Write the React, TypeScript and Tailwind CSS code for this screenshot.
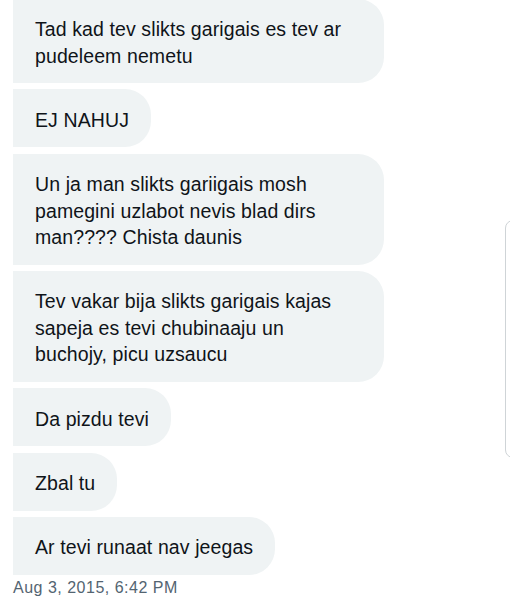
const messages: { lines: string[] }[] = [
  { lines: ['Tad kad tev slikts garigais es tev ar', 'pudeleem nemetu'] },
  { lines: ['EJ NAHUJ'] },
  { lines: ['Un ja man slikts gariigais mosh', 'pamegini uzlabot nevis blad dirs', 'man???? Chista daunis'] },
  { lines: ['Tev vakar bija slikts garigais kajas', 'sapeja es tevi chubinaaju un', 'buchojy, picu uzsaucu'] },
  { lines: ['Da pizdu tevi'] },
  { lines: ['Zbal tu'] },
  { lines: ['Ar tevi runaat nav jeegas'] },
];

function Bubble({ lines }: { lines: string[] }) {
  // wrapped messages fill the full bubble width
  const wide = lines.length > 1;
  return (
    <div
      className={`${wide ? 'w-[371px]' : 'w-fit'} rounded-r-[26px] bg-[#eff3f4] pb-[14px] pl-[22px] pr-[22px] pt-[17.5px] text-[19.5px] leading-[26.5px] tracking-[0.1px] text-[#0f1419]`}
    >
      {lines.map((line, i) => (
        <span key={i}>
          {line}
          {i < lines.length - 1 && <br />}
        </span>
      ))}
    </div>
  );
}

export default function App() {
  return (
    <div
      className="relative h-[600px] w-[510px] overflow-hidden bg-white"
      style={{ fontFamily: '"Liberation Sans", Arial, sans-serif' }}
    >
      {/* Conversation */}
      <div className="-mt-[1.5px] flex flex-col gap-[6.33px] pl-[13px]">
        {messages.map((m, i) => (
          <Bubble key={i} lines={m.lines} />
        ))}
        <div className="-mt-[3.7px] text-[16px] leading-[20px] tracking-[0.5px] text-[#536471]">Aug 3, 2015, 6:42 PM</div>
      </div>

      {/* Edge of the panel next to the chat */}
      <div className="absolute left-[505px] top-[220px] h-[238px] w-[20px] rounded-[8px] border border-[#cfd4d7]" />
    </div>
  );
}
